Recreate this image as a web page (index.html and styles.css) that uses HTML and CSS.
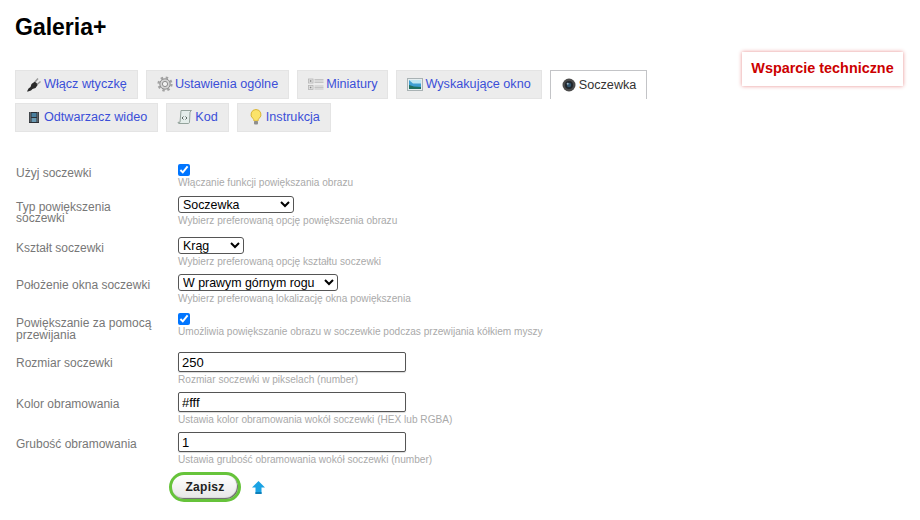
FILE: index.html
```html
<!DOCTYPE html>
<html lang="pl">
<head>
<meta charset="utf-8">
<title>Galeria+</title>
<link rel="stylesheet" href="styles.css">
</head>
<body>
<div class="page">
  <a class="support" href="#">Wsparcie techniczne</a>
  <h1 class="title">Galeria+</h1>
  <nav class="tabs">
    <a class="tab" href="#"><svg class="ico" viewBox="0 0 16 16"><path d="M1 15.500l1.500-3 2-1.500 1-3 3.500-2.500 3 3-2.500 3.500-3 1-1.500 1.500-3 1z" fill="#2b2b2b"/><path d="M9 6l3-3.500M11 8.500l3.500-3" stroke="#999" stroke-width="1.500"/></svg>Włącz wtyczkę</a>
    <a class="tab" href="#"><svg class="ico" viewBox="0 0 16 16"><circle cx="8" cy="8" r="5.200" fill="#d4d4d4" stroke="#8e8e8e" stroke-width="1"/><circle cx="8" cy="8" r="6.400" fill="none" stroke="#a2a2a2" stroke-width="2.400" stroke-dasharray="2.400 2.620"/><circle cx="8" cy="8" r="2.600" fill="#f2f2f2" stroke="#8e8e8e"/></svg>Ustawienia ogólne</a>
    <a class="tab" href="#"><svg class="ico" viewBox="0 0 16 16"><g fill="#e6e6e6" stroke="#b5b5b5" stroke-width=".8"><rect x=".5" y="3" width="4.500" height="4"/><rect x=".5" y="9.500" width="4.500" height="4"/></g><rect x="1.800" y="4.200" width="1.600" height="1.600" fill="#888"/><rect x="1.800" y="10.700" width="1.600" height="1.600" fill="#888"/><path d="M6.500 3.500h9M6.500 5h9M6.500 6.500h9M6.500 10h9M6.500 11.500h9M6.500 13h9" stroke="#c4c4c4"/></svg>Miniatury</a>
    <a class="tab" href="#"><svg class="ico" viewBox="0 0 16 16"><rect x=".5" y="2.500" width="15" height="12" fill="#e6eef0" stroke="#a9b2b4"/><rect x="2" y="4" width="12" height="9" fill="#3f9fd3"/><path d="M2 4h12v3.500H6z" fill="#bfe6f2"/><path d="M2 13V9l5 1.500 7 .5v2z" fill="#1f6f5f"/></svg>Wyskakujące okno</a>
    <a class="tab active" href="#"><svg class="ico" viewBox="0 0 16 16"><circle cx="8" cy="8" r="6.500" fill="#4b4b4b"/><circle cx="8" cy="8" r="4" fill="#20262c"/><circle cx="8" cy="8" r="2.200" fill="#33566f"/><circle cx="6.700" cy="6.700" r="1" fill="#9fb6c6"/></svg>Soczewka</a>
    <a class="tab" href="#"><svg class="ico" viewBox="0 0 16 16"><rect x="3" y="3" width="10" height="11" fill="#2b3036"/><rect x="5.500" y="4" width="5" height="4" fill="#4a7f9e"/><rect x="5.500" y="9" width="5" height="4" fill="#6a9ab3"/><path d="M4.200 3.500v10M11.800 3.500v10" stroke="#c4c4c4" stroke-dasharray="1 1"/></svg>Odtwarzacz wideo</a>
    <a class="tab" href="#"><svg class="ico" viewBox="0 0 16 16"><path d="M4 1.500h10.500l-1.500 1.500-.5 10c0 1-.5 1.500-1.500 1.500H2c-.7 0-1-.5-1-1.200h2z" fill="#e4edea" stroke="#94a39c"/><path d="M6.500 7.500l-1.500 1.500 1.500 1.500M8.500 7.500l1.500 1.500-1.500 1.500" fill="none" stroke="#5a6660"/></svg>Kod</a>
    <a class="tab" href="#"><svg class="ico" viewBox="0 0 16 16"><path d="M8 .5a5 5 0 0 0-3 9c.6.500 1 1.500 1 2.500h4c0-1 .4-2 1-2.500a5 5 0 0 0-3-9z" fill="#fbe36a" stroke="#d9b53a"/><rect x="6" y="12" width="4" height="3.500" rx="1" fill="#8e8e8e"/></svg>Instrukcja</a>
  </nav>
  <form class="form">
    <div class="row r1"><label class="lbl">Użyj soczewki</label><div class="field"><input class="check" type="checkbox" checked><span class="hint">Włączanie funkcji powiększania obrazu</span></div></div>
    <div class="row r2"><label class="lbl">Typ powiększenia soczewki</label><div class="field"><select class="sel s-type"><option>Soczewka</option></select><span class="hint">Wybierz preferowaną opcję powiększenia obrazu</span></div></div>
    <div class="row r3"><label class="lbl">Kształt soczewki</label><div class="field"><select class="sel s-shape"><option>Krąg</option></select><span class="hint">Wybierz preferowaną opcję kształtu soczewki</span></div></div>
    <div class="row r4"><label class="lbl">Położenie okna soczewki</label><div class="field"><select class="sel s-pos"><option>W prawym górnym rogu</option></select><span class="hint">Wybierz preferowaną lokalizację okna powiększenia</span></div></div>
    <div class="row r5"><label class="lbl">Powiększanie za pomocą przewijania</label><div class="field"><input class="check" type="checkbox" checked><span class="hint">Umożliwia powiększanie obrazu w soczewkie podczas przewijania kółkiem myszy</span></div></div>
    <div class="row r6"><label class="lbl">Rozmiar soczewki</label><div class="field"><input class="txt" type="text" value="250"><span class="hint">Rozmiar soczewki w pikselach (number)</span></div></div>
    <div class="row r7"><label class="lbl">Kolor obramowania</label><div class="field"><input class="txt" type="text" value="#fff"><span class="hint">Ustawia kolor obramowania wokół soczewki (HEX lub RGBA)</span></div></div>
    <div class="row r8"><label class="lbl">Grubość obramowania</label><div class="field"><input class="txt" type="text" value="1"><span class="hint">Ustawia grubość obramowania wokół soczewki (number)</span></div></div>
    <div class="actions">
      <button class="save" type="button">Zapisz</button>
      <svg class="up" viewBox="0 0 13 13"><path d="M6.500 0l6.500 6.500H9.500V13h-6V6.500H0z" fill="#1ba3e4"/><path d="M3.500 11h6v2h-6z" fill="#0f7fb8"/></svg>
    </div>
  </form>
</div>
</body>
</html>
```

FILE: styles.css
```css
html, body { margin: 0; padding: 0; background: #fff; }
body { font-family: "Liberation Sans", Arial, sans-serif; font-size: 13px; color: #444; }
.page { position: relative; width: 920px; height: 520px; padding: 15px 15px 0; box-sizing: border-box; overflow: hidden; }
.title { margin: 0; font-size: 23px; line-height: 25px; font-weight: 700; color: #000; }
.support { position: absolute; left: 742px; top: 52px; width: 161px; height: 34px; line-height: 32px; text-align: center; background: #fff; color: #c00; font-size: 14.4px; font-weight: 700; text-decoration: none; box-shadow: 0 0 4px rgba(204,0,0,.45); }
.tabs { display: flex; flex-wrap: wrap; column-gap: 8px; row-gap: 4px; margin-top: 30px; width: 660px; }
.tab { display: flex; align-items: center; height: 29px; box-sizing: border-box; padding: 0 10px 1px; background: #ececec; border: 1px solid #e4e4e4; color: #3b4fd8; font-size: 12.65px; text-decoration: none; white-space: nowrap; }
.tab.active { background: #fff; border: 1px solid #c3c4c7; border-bottom: 0; color: #333; }
.ico { width: 16px; height: 16px; margin-right: 2px; flex: none; }
.form { margin-top: 32px; }
.row { display: flex; }
.lbl { width: 163px; flex: none; box-sizing: border-box; padding: 4px 20px 0 1px; font-size: 12px; line-height: 11px; color: #777; }
.field { display: flex; flex-direction: column; align-items: flex-start; }
.hint { font-size: 10.1px; line-height: 12px; color: #aaa; margin-top: 1px; white-space: nowrap; }
.sel + .hint, .txt + .hint { margin-top: 2px; }
.check { margin: 0; width: 12px; height: 12px; accent-color: #0075ff; }
.sel { height: 17px; margin-top: 1px; font-family: "Liberation Sans", Arial, sans-serif; font-size: 12.4px; color: #000; background: #fff; border: 1px solid #555; border-radius: 3px; padding: 0; }
.s-type { width: 116px; }
.s-shape { width: 66px; }
.s-pos { width: 160px; }
.txt { width: 228px; height: 20px; box-sizing: border-box; padding: 0 3px; font-family: "Liberation Sans", Arial, sans-serif; font-size: 13px; color: #000; border: 1px solid #555; border-radius: 2px; box-shadow: 0 1px 1px rgba(0,0,0,.15); }
.r1 { height: 31px; }
.r2 { height: 41px; }
.r3 { height: 37px; }
.r4 { height: 40px; }
.r5 { height: 39px; }
.r6, .r7, .r8 { height: 40px; }
.r2 .lbl { padding-top: 7px; }
.r3 .lbl, .r4 .lbl { padding-top: 7px; }
.r5 .lbl { padding-top: 4px; line-height: 12px; }
.r6 .lbl { padding-top: 6px; }
.r7 .lbl, .r8 .lbl { padding-top: 7px; }
.actions { display: flex; align-items: center; gap: 11px; margin-left: 154px; }
.save { width: 72px; height: 30px; box-sizing: border-box; border: 3px solid #66c33a; border-radius: 15px; background: linear-gradient(#fff, #e6e6e6); box-shadow: inset -1px -1px 1px #666; font-family: "Liberation Sans", Arial, sans-serif; font-size: 12px; font-weight: 700; letter-spacing: .3px; color: #222; padding: 0; }
.up { width: 13px; height: 13px; }
```
